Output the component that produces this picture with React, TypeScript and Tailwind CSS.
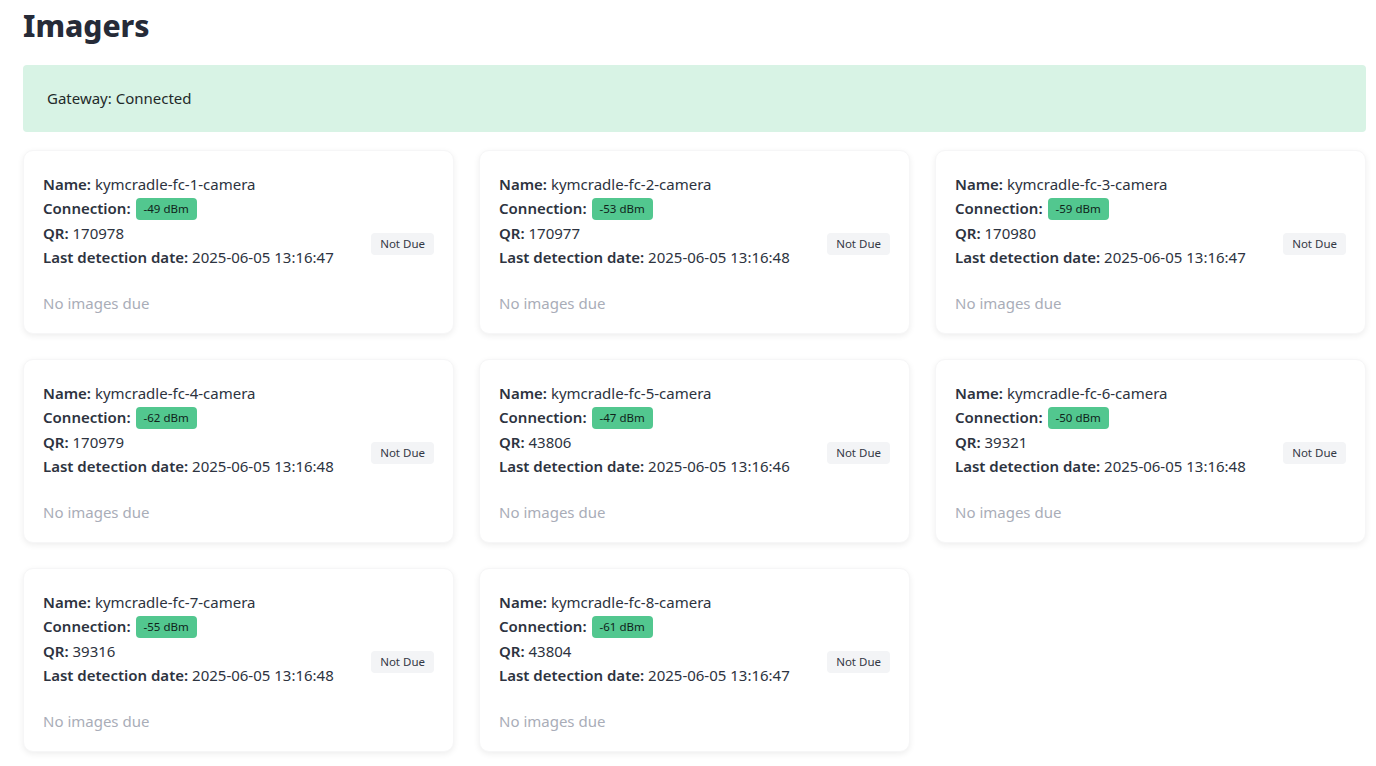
const imagers = [
  { n: 1, dbm: -49, qr: "170978", date: "2025-06-05 13:16:47" },
  { n: 2, dbm: -53, qr: "170977", date: "2025-06-05 13:16:48" },
  { n: 3, dbm: -59, qr: "170980", date: "2025-06-05 13:16:47" },
  { n: 4, dbm: -62, qr: "170979", date: "2025-06-05 13:16:48" },
  { n: 5, dbm: -47, qr: "43806", date: "2025-06-05 13:16:46" },
  { n: 6, dbm: -50, qr: "39321", date: "2025-06-05 13:16:48" },
  { n: 7, dbm: -55, qr: "39316", date: "2025-06-05 13:16:48" },
  { n: 8, dbm: -61, qr: "43804", date: "2025-06-05 13:16:47" },
];

export default function App() {
  return (
    <div
      className="min-h-screen bg-white pl-[23px] pr-[10px] pt-[4px] text-[#2d3340]"
      style={{ fontFamily: '"Segoe UI", "Noto Sans", "Open Sans", sans-serif' }}
    >
      <h1 className="text-[30px] font-extrabold leading-[44px] text-[#262b38]">Imagers</h1>
      <div className="mt-[17px] flex h-[67px] items-center rounded-[4px] bg-[#d8f3e5] px-[24px] text-[15px] text-[#1f2a2a]">
        Gateway: Connected
      </div>
      <div className="mt-[18px] grid grid-cols-3 gap-x-[25px] gap-y-[25px]">
        {imagers.map((c) => (
          <div
            key={c.n}
            className="flex h-[184px] items-center justify-between rounded-[10px] border border-[#f6f6f7] bg-white px-[19px] pt-[3px] shadow-[0_2px_6px_rgba(0,0,0,0.07)]"
          >
            <div>
              <div className="text-[15px] leading-[24.3px]">
                <div>
                  <b className="font-semibold">Name:</b> kymcradle-fc-{c.n}-camera
                </div>
                <div className="flex items-center gap-[5px]">
                  <b className="font-semibold">Connection:</b>
                  <span className="rounded-[4px] bg-[#52c78f] px-[8px] text-[11.5px] leading-[22px] text-[#10231a]">
                    {c.dbm} dBm
                  </span>
                </div>
                <div>
                  <b className="font-semibold">QR:</b> {c.qr}
                </div>
                <div>
                  <b className="font-semibold">Last detection date:</b> {c.date}
                </div>
              </div>
              <div className="mt-[23px] text-[15px] text-[#a9adb8]">No images due</div>
            </div>
            <span className="rounded-[4px] bg-[#f3f4f6] px-[9px] text-[11.5px] leading-[22px] text-[#333845]">
              Not Due
            </span>
          </div>
        ))}
      </div>
    </div>
  );
}
